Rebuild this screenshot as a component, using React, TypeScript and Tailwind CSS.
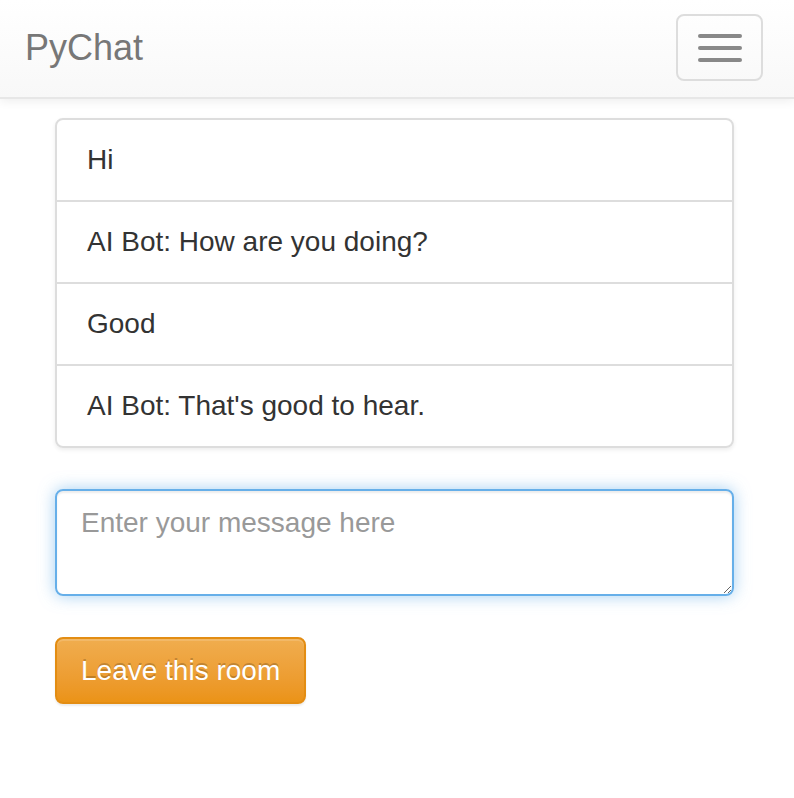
import React from "react";

export default function App() {
  const messages = ["Hi", "AI Bot: How are you doing?", "Good", "AI Bot: That's good to hear."];
  return (
    <div className="min-h-[798px] bg-white font-['Liberation_Sans',Arial,sans-serif] text-[#333]">
      <nav className="h-[99px] border-b-2 border-[#e7e7e7] bg-gradient-to-b from-white to-[#f8f8f8] shadow-[0_2px_10px_rgba(0,0,0,0.075)] flex items-start justify-between">
        <div className="pl-[25px] pt-[28px] text-[36px] leading-[40px] text-[#777]">PyChat</div>
        <button className="mt-[14px] mr-[31px] w-[87px] h-[67px] rounded-[8px] border-2 border-[#ddd] flex flex-col items-center justify-center gap-[8px]">
          <span className="block w-[44px] h-[4px] rounded-[2px] bg-[#888]" />
          <span className="block w-[44px] h-[4px] rounded-[2px] bg-[#888]" />
          <span className="block w-[44px] h-[4px] rounded-[2px] bg-[#888]" />
        </button>
      </nav>
      <div className="ml-[55px] w-[679px] pt-[19px]">
        <div className="rounded-[8px] border-2 border-[#ddd] shadow-[0_2px_4px_rgba(0,0,0,0.075)] overflow-hidden">
          {messages.map((m, i) => (
            <div
              key={i}
              className={
                i < 3
                  ? "h-[82px] px-[30px] flex items-center text-[28px] leading-[40px] border-b-2 border-[#ddd]"
                  : "h-[80px] px-[30px] flex items-center text-[28px] leading-[40px]"
              }
            >
              {m}
            </div>
          ))}
        </div>
        <textarea
          placeholder="Enter your message here"
          className="mt-[41px] block w-[679px] h-[107px] rounded-[8px] border-2 border-[#66afe9] px-[24px] py-[12px] text-[28px] leading-[40px] text-[#555] placeholder:text-[#999] outline-none shadow-[inset_0_2px_2px_rgba(0,0,0,0.075),0_0_16px_rgba(102,175,233,0.6)] resize-y"
        />
        <button className="mt-[41px] h-[67px] px-[24px] rounded-[8px] border-2 border-[#e38d13] bg-gradient-to-b from-[#f0ad4e] to-[#eb9316] text-white text-[28px] leading-[40px] shadow-[inset_0_2px_0_rgba(255,255,255,0.15),0_2px_2px_rgba(0,0,0,0.075)] [text-shadow:0_-2px_0_rgba(0,0,0,0.2)]">
          Leave this room
        </button>
      </div>
    </div>
  );
}
